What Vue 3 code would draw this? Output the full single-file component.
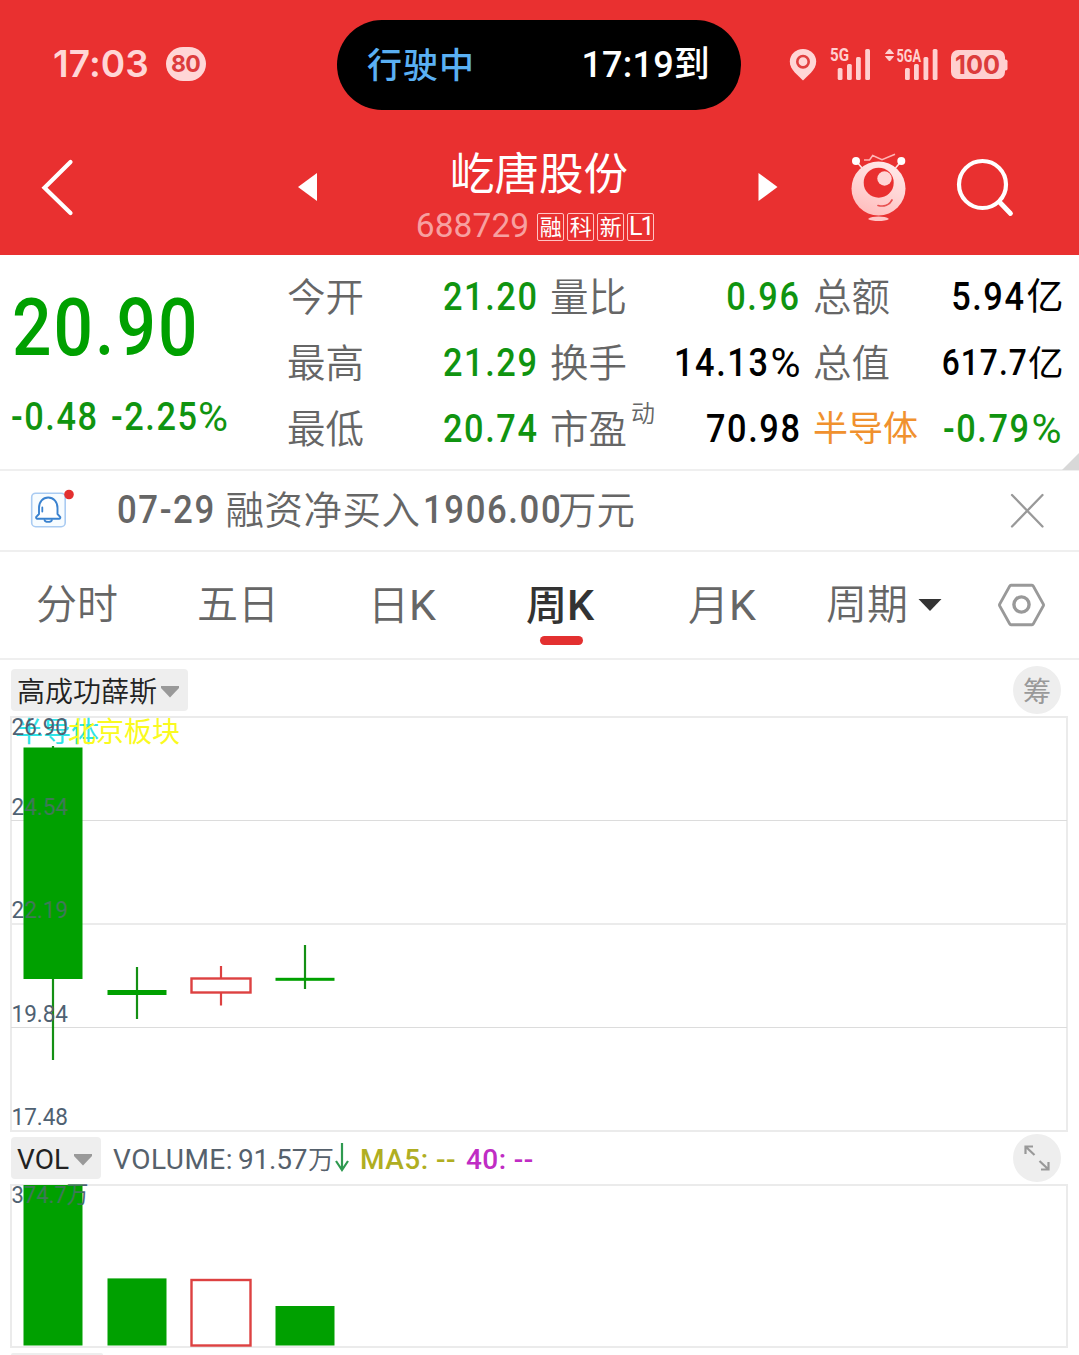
<script setup>
const quoteColumns = [
  [
    { label: '今开', value: '21.20', tone: 'down' },
    { label: '最高', value: '21.29', tone: 'down' },
    { label: '最低', value: '20.74', tone: 'down' },
  ],
  [
    { label: '量比', value: '0.96', tone: 'down' },
    { label: '换手', value: '14.13', unit: '%' },
    { label: '市盈', sup: '动', value: '70.98' },
  ],
  [
    { label: '总额', value: '5.94', cjk: '亿' },
    { label: '总值', value: '617.7', cjk: '亿', small: true },
    { label: '半导体', value: '-0.79', unit: '%', tone: 'down', sector: true },
  ],
]

const badges = ['融', '科', '新', 'L1']

// Chart coordinates are relative to the top-left corner of each panel.
const candles = [
  { x: 53, open: 31.5, close: 263, high: 30, low: 344, up: false },
  { x: 137, open: 274, close: 279, high: 251, low: 303, up: false },
  { x: 221, open: 262.5, close: 276.5, high: 250, low: 289.5, up: true },
  { x: 305, open: 261.8, close: 264.8, high: 229, low: 273, up: false },
]
const axis = [
  { y: 19, text: '26.90' },
  { y: 99, text: '24.54', over: true },
  { y: 202, text: '22.19', over: true },
  { y: 306, text: '19.84' },
  { y: 409, text: '17.48' },
]
const volumes = [
  { x: 53, top: 1, up: false },
  { x: 137, top: 94.4, up: false },
  { x: 221, top: 96, up: true },
  { x: 305, top: 122, up: false },
]
</script>

<template>
  <div class="page">
    <header class="head">
      <div class="status">
        <span class="clock">17:03</span>
        <span class="speed">80</span>
        <div class="island">
          <span class="driving">行驶中</span>
          <span class="eta">17:19到</span>
        </div>
        <svg class="pin" width="28" height="34" viewBox="0 0 28 34">
          <path d="M14 1C6.500 1 .8 6.600 .8 13.500c0 4.500 2.200 7.800 5 11L14 32.500l8.200-8c2.800-3.200 5-6.500 5-11C27.200 6.600 21.500 1 14 1z" fill="#ffd6d6" />
          <circle cx="14" cy="13.700" r="5.700" fill="none" stroke="#e04040" stroke-width="2.600" />
        </svg>
        <svg class="sig1" width="42" height="34" viewBox="0 0 42 34">
          <text x="0" y="14" font-size="17.500" textLength="19" lengthAdjust="spacingAndGlyphs" class="net">5G</text>
          <g fill="#ffd0d0">
            <rect x="7.700" y="21" width="4.800" height="12" rx="1.500" />
            <rect x="17" y="17" width="4.800" height="16" rx="1.500" />
            <rect x="26" y="10" width="4.800" height="23" rx="1.500" />
            <rect x="35.200" y="2" width="4.800" height="31" rx="1.500" />
          </g>
        </svg>
        <svg class="sig2" width="54" height="34" viewBox="0 0 54 34">
          <path d="M.5 6.500 4.500 2l4 4.500zM.5 9.500l4 4.500 4-4.500z" fill="#ffd0d0" stroke="#ffd0d0" stroke-linejoin="round" />
          <text x="11.500" y="14.500" font-size="18" textLength="24.500" lengthAdjust="spacingAndGlyphs" class="net">5GA</text>
          <g fill="#ffd0d0">
            <rect x="20" y="21" width="4.800" height="12" rx="1.500" />
            <rect x="29" y="17" width="4.800" height="16" rx="1.500" />
            <rect x="38.500" y="10" width="4.800" height="23" rx="1.500" />
            <rect x="47.700" y="2" width="4.800" height="31" rx="1.500" />
          </g>
        </svg>
        <svg class="battery" width="57" height="30" viewBox="0 0 57 30">
          <rect x="0" y="0" width="54" height="29" rx="7" fill="#ffd0d0" />
          <rect x="52" y="9.500" width="4.500" height="11" rx="1.800" fill="#ffd0d0" />
          <text x="4" y="24" font-size="26" textLength="45" lengthAdjust="spacingAndGlyphs" class="charge">100</text>
        </svg>
      </div>

      <nav class="nav">
        <svg class="back" width="34" height="60" viewBox="0 0 34 60">
          <path d="M30.500 4 4.500 29.800 30.500 55" fill="none" stroke="#fff" stroke-width="4.200" stroke-linecap="round" />
        </svg>
        <svg class="prev" width="20" height="28" viewBox="0 0 20 28"><path d="M0 14 19 0v28z" fill="#fff" /></svg>
        <div class="title">
          <h1>屹唐股份</h1>
          <div class="code">
            <span>688729</span>
            <i v-for="b in badges" :key="b" :class="{ latin: b === 'L1' }">{{ b }}</i>
          </div>
        </div>
        <svg class="next" width="20" height="28" viewBox="0 0 20 28"><path d="M19.500 14 .5 0v28z" fill="#fff" /></svg>
        <svg class="robot" width="56" height="70" viewBox="0 0 56 70">
          <defs>
            <linearGradient id="skin" x1=".7" y1="0" x2=".3" y2="1">
              <stop offset="0" stop-color="#ffe9e9" />
              <stop offset=".5" stop-color="#ffd5d5" />
              <stop offset="1" stop-color="#ffbcbc" />
            </linearGradient>
          </defs>
          <path d="M5.500 8.500 11 15M50 8.500 44.500 15" stroke="#ffe6e6" stroke-width="1.600" />
          <circle cx="5" cy="8" r="4" fill="#fff" />
          <circle cx="50.300" cy="8" r="4" fill="#fff" />
          <path d="M13 7h5.500l3.200-4.500L31 6.800 44 1.200" fill="none" stroke="#ffb5b5" stroke-width="1.500" />
          <circle cx="27.500" cy="35.500" r="27" fill="url(#skin)" />
          <circle cx="27.700" cy="29.700" r="15" fill="#e93030" />
          <circle cx="33.500" cy="25.500" r="7.200" fill="#ffd5d5" />
          <path d="M27 52.500c6 1.500 11.500-.5 14-5.500" fill="none" stroke="#e85050" stroke-width="1.700" stroke-linecap="round" />
          <path d="M17 66c4-3.200 17-3.200 21 0-4 2.700-17 2.700-21 0z" fill="#ffc4c4" />
        </svg>
        <svg class="search" width="58" height="60" viewBox="0 0 58 60">
          <circle cx="26.500" cy="25.500" r="23.500" fill="none" stroke="#fff" stroke-width="4.200" />
          <path d="M43.500 43 54.500 54.500" stroke="#fff" stroke-width="4.800" stroke-linecap="round" />
        </svg>
      </nav>
    </header>

    <section class="quote">
      <div class="last">
        <div class="price">20.90</div>
        <div class="change">
          <span class="din diff">-0.48</span>
          <span class="din pct">-2.25</span><b>%</b>
        </div>
      </div>
      <div v-for="(col, i) in quoteColumns" :key="i" class="qcol">
        <div v-for="c in col" :key="c.label" class="qrow">
          <span class="label" :class="{ sector: c.sector }">{{ c.label }}<sup v-if="c.sup">{{ c.sup }}</sup></span>
          <span class="value" :class="[c.tone, { small: c.small, edge: c.sector }]">
            <span class="din right">{{ c.value }}</span><b v-if="c.unit">{{ c.unit }}</b><em v-if="c.cjk">{{ c.cjk }}</em>
          </span>
        </div>
      </div>
      <div class="corner"></div>
    </section>

    <section class="notice">
      <svg class="bell" width="46" height="40" viewBox="0 0 46 40">
        <rect x="1.700" y="4.200" width="33.500" height="33.500" rx="4" fill="#f7fcff" stroke="#a9cbf2" stroke-width="1.600" />
        <path d="M9 25V19c0-6.500 4-10.500 9.200-10.500S27.500 12.500 27.500 19v6l2.600 2.800c.5.800 0 2-1 2H7.300c-1 0-1.500-1.200-1-2z" fill="#fff" stroke="#3a82cf" stroke-width="1.900" stroke-linejoin="round" />
        <path d="M14.500 31c.8 2.600 6.600 2.600 7.400 0M12.300 18.500v4" fill="none" stroke="#3a82cf" stroke-width="1.800" stroke-linecap="round" />
        <circle cx="39" cy="5.500" r="4.800" fill="#e33030" />
      </svg>
      <p><b class="din day">07-29</b><span class="first">融资净买入</span><b class="din sum">1906.00</b><span>万元</span></p>
      <svg class="close" width="36" height="36" viewBox="0 0 36 36">
        <path d="M3 2 33.500 33.500M33.500 2 3 33.500" stroke="#999" stroke-width="2.300" stroke-linecap="round" />
      </svg>
    </section>

    <section class="tabs">
      <span class="t1">分时</span>
      <span class="t2">五日</span>
      <span class="t3">日<u>K</u></span>
      <span class="t4 active">周<u>K</u></span>
      <span class="t5">月<u>K</u></span>
      <span class="t6">周期</span>
      <svg class="more" width="24" height="14" viewBox="0 0 24 14"><path d="M.5 1h23L12 13z" fill="#333" /></svg>
      <svg class="gear" width="48" height="46" viewBox="0 0 48 46">
        <path d="M13 3.300h21a1.500 1.500 0 0 1 1.300.8l10 18a2 2 0 0 1 0 1.800l-10 18a1.500 1.500 0 0 1-1.300.8H13a1.500 1.500 0 0 1-1.300-.8l-10-18a2 2 0 0 1 0-1.800l10-18a1.500 1.500 0 0 1 1.300-.8z" fill="none" stroke="#999" stroke-width="2.900" />
        <circle cx="23.500" cy="22.500" r="7.600" fill="none" stroke="#999" stroke-width="3.400" />
      </svg>
    </section>

    <div class="bar">
      <div class="chip name">
        <span>高成功薛斯</span>
        <svg width="18" height="12" viewBox="0 0 18 12"><path d="M0 0h18v2L9 11.500 0 2z" fill="#999" /></svg>
      </div>
      <div class="round">筹</div>
    </div>

    <svg class="kline" width="1079" height="416" viewBox="0 0 1079 416">
      <defs>
        <linearGradient id="ink" gradientUnits="userSpaceOnUse" x1="0" y1="0" x2="100" y2="0">
          <stop offset=".237" stop-color="#4f6172" />
          <stop offset=".237" stop-color="#3f7858" />
          <stop offset=".826" stop-color="#3f7858" />
          <stop offset=".826" stop-color="#4f6172" />
        </linearGradient>
      </defs>
      <rect x="11" y="1" width="1056" height="414" fill="none" stroke="#ebebeb" stroke-width="2" />
      <path d="M11 104.500h1056M11 311.500h1056" stroke="#dcdcdc" />
      <path d="M11 208h1056" stroke="#ebebeb" stroke-width="2" />
      <text x="15" y="26" font-size="28" textLength="84" class="cn" fill="#2fe3e6">半导体</text>
      <text x="68" y="26" font-size="28" textLength="112" class="cn" fill="#fafa20">北京板块</text>
      <g v-for="c in candles" :key="c.x" :stroke="c.up ? '#dd4141' : '#149014'" stroke-width="2.200">
        <path v-if="c.up" :d="`M${c.x} ${c.high}V${c.open}M${c.x} ${c.close}V${c.low}`" />
        <path v-else :d="`M${c.x} ${c.high}V${c.low}`" />
        <rect v-if="c.up" :x="c.x - 29.500" :y="c.open" width="59" :height="c.close - c.open" fill="#fff" stroke-width="2.400" />
        <rect v-else :x="c.x - 29.500" :y="c.open" width="59" :height="c.close - c.open" fill="#00a000" stroke="none" />
      </g>
      <text v-for="a in axis" :key="a.text" x="11.500" :y="a.y" font-size="24" textLength="56.500" lengthAdjust="spacingAndGlyphs" class="num" :fill="a.over ? 'url(#ink)' : '#4f6172'">{{ a.text }}</text>
    </svg>

    <div class="bar vol">
      <div class="chip">
        <span class="en">VOL</span>
        <svg width="18" height="12" viewBox="0 0 18 12"><path d="M0 0h18v2L9 11.500 0 2z" fill="#999" /></svg>
      </div>
      <span class="v1">VOLUME:</span>
      <span class="v2">91.57</span><em class="wan">万</em>
      <svg class="fall" width="14" height="30" viewBox="0 0 14 30"><path d="M7 1v27M1 19l6 9 6-9" fill="none" stroke="#2f9a50" stroke-width="2.200" /></svg>
      <span class="v3">MA5: --</span>
      <span class="v4">40: --</span>
      <div class="round expand">
        <svg width="28" height="28" viewBox="0 0 28 28">
          <path d="M2.500 10V2.500H10M2.500 2.500l9 8.500M25.500 18v7.500H18M25.500 25.500l-9-8.500" fill="none" stroke="#999" stroke-width="2.200" />
        </svg>
      </div>
    </div>

    <svg class="volume" width="1079" height="164" viewBox="0 0 1079 164">
      <rect x="11" y="1" width="1056" height="162" fill="none" stroke="#ebebeb" stroke-width="2" />
      <template v-for="v in volumes" :key="v.x">
        <rect v-if="v.up" :x="v.x - 29.500" :y="v.top" width="59" :height="161.500 - v.top" fill="#fff" stroke="#dd4141" stroke-width="2.400" />
        <rect v-else :x="v.x - 29.500" :y="v.top" width="59" :height="161.500 - v.top" fill="#00a000" />
      </template>
      <text x="11.500" y="19" font-size="24" textLength="77" lengthAdjust="spacingAndGlyphs" class="num" fill="url(#ink)">374.7<tspan class="cn">万</tspan></text>
    </svg>
    <div class="nextchip"></div>
  </div>
</template>

<style>
body {
  margin: 0;
  background: #fff;
}
</style>

<style scoped>
.page {
  width: 1079px;
  height: 1355px;
  overflow: hidden;
  background: #fff;
  font-family: Roboto, "Noto Sans CJK SC", sans-serif;
  color: #666;
}
svg { display: block; flex: none; overflow: visible; }
b, em, i, u { font-style: normal; text-decoration: none; }
span, b { white-space: nowrap; }
.cn { font-family: "Noto Sans CJK SC", sans-serif; font-weight: 400; }
.num { font-family: Roboto, "Noto Sans CJK SC", sans-serif; font-weight: 450; }

/* Narrow, widely tracked numerals */
.din { display: inline-block; transform: scaleX(.88); transform-origin: left; letter-spacing: 1.800px; font-weight: 500; }
.din.right { transform-origin: right; margin-right: -.5px; }

.head { height: 255px; background: #e93030; }
.status { height: 110px; display: flex; align-items: flex-start; }
.clock {
  flex: none; box-sizing: border-box; width: 165px; padding-left: 53px; margin-top: 45px;
  font: 600 37px/38px Inter, sans-serif; letter-spacing: .1px; color: #ffd6d6;
}
.speed {
  flex: none; width: 40px; height: 34px; margin: 47px 0 0 .5px; border-radius: 17px; background: #ffd6d6;
  color: #dc3c3c; font: 700 23px/34px Inter, sans-serif; text-align: center; letter-spacing: -.8px;
}
.island {
  box-sizing: border-box; flex: none; width: 404px; height: 90px; margin: 20px 0 0 131.500px; padding: 0 31px 0 30px;
  border-radius: 45px; background: #000; display: flex; justify-content: space-between; line-height: 90px;
}
.driving { font-size: 35px; font-weight: 500; letter-spacing: 1px; line-height: 93px; color: #5ab0f3; }
.eta { font-size: 36px; font-weight: 500; letter-spacing: .2px; color: #fff; }
.pin { margin: 48px 0 0 48px; }
.sig1 { margin: 47px 0 0 13px; }
.sig2 { margin: 47px 0 0 13px; }
.battery { margin: 50px 0 0 12px; }
.net { font-family: Roboto, sans-serif; font-weight: 700; fill: #ffd0d0; }
.charge { font-family: Inter, sans-serif; font-weight: 700; fill: #dc3c3c; }

.nav { height: 145px; display: flex; align-items: flex-start; }
.back { margin: 48px 0 0 40px; }
.prev { margin: 63px 0 0 224px; }
.title { width: 440px; display: flex; flex-direction: column; align-items: center; }
h1 { margin: 37px 0 0 2px; font-size: 44.500px; line-height: 56px; font-weight: 400; color: #fff; }
.code { display: flex; align-items: center; height: 28px; margin: 10px 6px 0 0; }
.code span { font-size: 33.500px; line-height: 38px; margin-top: -2px; font-weight: 400; letter-spacing: .1px; color: #f7a0a0; margin-right: 5px; }
.code i {
  box-sizing: border-box; width: 27px; height: 28px; margin-left: 3px; border: 1px solid #ffc4c4; border-radius: 2px;
  color: #fff; font-size: 22px; line-height: 27px; display: flex; justify-content: center;
}
.code i.latin { font-size: 25px; font-weight: 400; letter-spacing: -2px; line-height: 26px; }
.next { margin: 63px 0 0 0; }
.robot { margin: 43px 0 0 73px; }
.search { margin: 49px 0 0 49px; }

.quote { height: 214px; display: flex; position: relative; border-bottom: 2px solid #efefef; color: #000; }
.last { width: 287px; color: #00a000; }
.price { margin: 33px 0 0 11.500px; font-size: 79px; line-height: 80px; font-weight: 500; letter-spacing: 2.300px; transform: scaleX(.88); transform-origin: left; }
.change { display: flex; margin: 29px 0 0 11px; font-size: 39px; line-height: 40px; color: #109410; }
.diff { width: 100px; }
.pct { width: 87px; }
.change b, .value b { font-weight: 450; font-size: 41px; }
.qcol { width: 250.500px; margin-right: 12.500px; padding-top: 9px; }
.qrow { display: flex; justify-content: space-between; height: 66px; line-height: 66px; }
.label { font-size: 38.500px; line-height: 68px; color: #666; font-weight: 350; }
.label sup { font-size: 24px; line-height: 1; vertical-align: 21px; margin-left: 4px; }
.label.sector { font-size: 35px; color: #f0912e; font-weight: 400; }
.value { font-size: 39px; display: flex; }
.value b { margin-left: 1px; }
.value.edge { margin-right: 2px; }
.value.small { font-size: 36px; }
.value em { font-weight: 400; font-size: 37px; line-height: 68px; margin-left: 1px; }
.value.small em { font-size: 35.500px; }
.value.small .din { letter-spacing: 1.200px; }
.down { color: #109410; }
.corner { position: absolute; right: 0; bottom: -1px; border-style: solid; border-width: 0 0 17px 17px; border-color: transparent transparent #d8d8d8 transparent; }

.notice { height: 79px; display: flex; align-items: center; border-bottom: 2px solid #efefef; }
.bell { margin: -4px 0 0 30px; }
.notice p { width: 892px; margin: 0 0 0 41px; display: flex; line-height: 79px; font-size: 38.500px; }
.notice b { font-size: 39.500px; flex: none; }
.notice .day { width: 108.500px; }
.notice .sum { width: 135.500px; }
.notice .first { width: 197px; letter-spacing: .5px; }
.notice p span { font-weight: 350; line-height: 81px; }

.tabs { height: 106px; display: flex; border-bottom: 2px solid #efefef; font-size: 41px; line-height: 105px; }
.tabs span { box-sizing: border-box; flex: none; position: relative; font-weight: 350; line-height: 107px; }
.tabs u { font-size: 43px; font-weight: 400; }
.t1 { width: 161px; margin-left: 36px; }
.t2 { width: 171px; }
.t3 { width: 158px; }
.t4 { width: 162px; }
.t5 { width: 138px; }
.t6 { width: 92px; }
.tabs .active { color: #333; font-weight: 500; }
.active u { font-weight: 500; }
.active::after { content: ""; position: absolute; left: 14px; top: 84px; width: 43px; height: 9px; border-radius: 4.500px; background: #e33030; }
.more { margin-top: 46px; }
.gear { margin: 30px 0 0 56px; }

.bar { box-sizing: border-box; height: 56px; padding: 9px 18px 0 11px; display: flex; position: relative; }
.chip { height: 42px; padding: 0 9px 0 6px; border-radius: 4px; background: #eee; display: flex; align-items: center; gap: 3px; font-size: 28px; line-height: 42px; color: #222; flex: none; }
.chip svg { margin-top: 4px; }
.name { height: 42px; }
.name span { width: 141px; font-weight: 350; padding-top: 5px; }
.round { box-sizing: border-box; width: 48px; height: 48px; margin: -3px 0 0 auto; border-radius: 50%; background: #eee; color: #999; font-size: 28px; line-height: 53px; text-align: center; flex: none; }
.vol { height: 52px; padding-top: 5px; line-height: 45px; font-size: 28px; }
.en { width: 54px; padding-top: 3px; }
.v1 { width: 125px; margin-left: 12px; color: #56616c; letter-spacing: .5px; }
.v2 { width: 70px; color: #56616c; font-weight: 450; letter-spacing: -.2px; }
.wan { width: 25px; color: #56616c; font-size: 26px; line-height: 47px; font-weight: 350; }
.fall { margin: 5px 11px 0 2px; }
.v3 { width: 106px; color: #b0ae22; font-weight: 500; letter-spacing: .5px; }
.v4 { color: #c02cc4; font-weight: 500; letter-spacing: .4px; }
.expand { display: flex; align-items: center; justify-content: center; }
.nextchip { width: 92px; height: 4px; margin: 5px 0 0 11px; border-radius: 4px; background: #eee; }
</style>
